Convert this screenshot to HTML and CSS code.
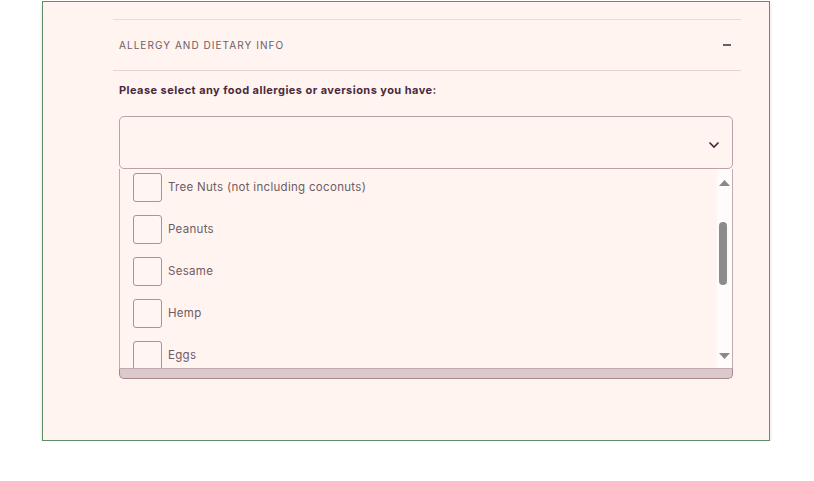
FILE: index.html
```html
<!DOCTYPE html>
<html lang="en">
<head>
    <meta charset="UTF-8">
    <title>Allergy and dietary info</title>
    <link rel="stylesheet" href="styles.css">
</head>
<body>
    <div class="card">
        <div class="section">
            <div class="sechead">
                <span class="sectitle">ALLERGY AND DIETARY INFO</span>
                <span class="toggle"></span>
            </div>
            <div class="field">
                <div class="lbl">Please select any food allergies or aversions you have:</div>
                <div class="selwrap">
                    <div class="selbox">
                        <svg class="chev" width="12" height="8" viewBox="0 0 12 8"><path d="M1.5 1.5 L6 6 L10.5 1.5" fill="none" stroke="#4a2438" stroke-width="1.6"/></svg>
                    </div>
                    <div class="nextbox"></div>
                    <!-- open options list -->
                    <div class="optlist">
                        <div class="opts">
                            <label class="opt"><span class="cb"></span>Tree Nuts (not including coconuts)</label>
                            <label class="opt"><span class="cb"></span>Peanuts</label>
                            <label class="opt"><span class="cb"></span>Sesame</label>
                            <label class="opt"><span class="cb"></span>Hemp</label>
                            <label class="opt"><span class="cb"></span>Eggs</label>
                        </div>
                        <div class="sbar">
                            <svg class="arr" width="15" height="14" viewBox="0 0 15 14"><path d="M2 11 L7.5 5 L13 11 Z" fill="#8c8888"/></svg>
                            <div class="track"><div class="thumb"></div></div>
                            <svg class="arr" width="15" height="14" viewBox="0 0 15 14"><path d="M2 3 L7.5 9 L13 3 Z" fill="#8c8888"/></svg>
                        </div>
                    </div>
                </div>
            </div>
        </div>
    </div>
</body>
</html>
```

FILE: styles.css
```css
*{
    box-sizing: border-box;
}
body{
    margin: 0;
    background: #ffffff;
    font-family: 'Inter', sans-serif;
}
.card{
    margin: 1px 0 0 42px;
    width: 728px;
    height: 440px;
    background-color: #fff4f0;
    border: 1px solid #5f8f67;
    box-shadow: 0 3px 4px rgba(0,0,0,0.12);
    padding: 17px 28px 0 70px;
}
.sechead{
    display: flex;
    justify-content: space-between;
    align-items: center;
    height: 52px;
    border-top: 1px solid #e9dcd8;
    border-bottom: 1px solid #e3d4d1;
    padding: 0 10px 0 6px;
}
.sectitle{
    font-size: 10px;
    letter-spacing: 1.05px;
    color: #6e5c64;
}
.toggle{
    width: 8px;
    height: 2px;
    background: #6e5c64;
}
.field{
    padding: 0 8px 0 6px;
}
.lbl{
    font-size: 11px;
    font-weight: 700;
    letter-spacing: 0.45px;
    color: #4a2a3c;
    padding-top: 12px;
    height: 45px;
}
.selwrap{
    position: relative;
}
.selbox{
    height: 53px;
    border: 1px solid #b9a1a9;
    border-radius: 5px;
    display: flex;
    justify-content: flex-end;
    align-items: center;
    padding: 5px 12px 0 0;
}
.nextbox{
    margin-top: 8px;
    height: 202px;
    border: 1px solid #a8868f;
    border-top: 0;
    border-radius: 0 0 5px 5px;
    background: linear-gradient(#c2a6ae, #dccacd);
}
.optlist{
    position: absolute;
    left: 0;
    right: 0;
    top: 53px;
    height: 200px;
    display: flex;
    background: #fff4f0;
    border: 1px solid #c2aab1;
    border-top: 0;
    overflow: hidden;
}
.opts{
    flex: 1;
    padding: 0 0 0 13px;
    margin-top: -3px;
}
.opt{
    display: flex;
    align-items: center;
    height: 42px;
    font-size: 11.5px;
    letter-spacing: 0.3px;
    color: #6e5c64;
}
.cb{
    width: 29px;
    height: 29px;
    border: 1px solid #a99298;
    border-radius: 3px;
    margin-right: 6px;
    background: #fff6f3;
}
.sbar{
    width: 15px;
    background: #fdfbfb;
    display: flex;
    flex-direction: column;
    padding: 6px 0 4px;
}
.track{
    flex: 1;
    padding: 33px 0 0 2px;
}
.thumb{
    width: 8px;
    height: 63px;
    border-radius: 4px;
    background: #8c8c8c;
}
```
